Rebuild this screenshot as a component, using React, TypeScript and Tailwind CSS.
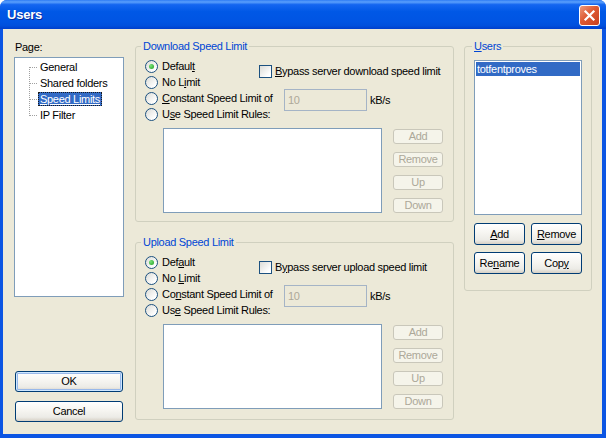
import React from "react";

function U({ children }: { children: React.ReactNode }) {
  return <span className="underline underline-offset-[1px]">{children}</span>;
}

function Radio({ checked, children }: { checked?: boolean; children: React.ReactNode }) {
  return (
    <div className="flex items-center h-[16px] whitespace-nowrap">
      <span className="w-[13px] h-[13px] shrink-0 rounded-full border border-[#1C5180] bg-[linear-gradient(135deg,#DCDCD7,#FFFFFF_80%)] flex items-center justify-center">
        {checked && (
          <span className="w-[5px] h-[5px] rounded-full bg-[radial-gradient(circle_at_35%_35%,#7BE27B,#1E9E1E)]" />
        )}
      </span>
      <span className="ml-[4px] leading-[13px]">{children}</span>
    </div>
  );
}

function Checkbox({ children }: { children: React.ReactNode }) {
  return (
    <div className="flex items-center whitespace-nowrap">
      <span className="w-[13px] h-[13px] shrink-0 border border-[#1C5180] bg-[linear-gradient(135deg,#DCDCD7,#FFFFFF_80%)]" />
      <span className="ml-[3px] leading-[13px]">{children}</span>
    </div>
  );
}

function DisabledBtn({ children }: { children: React.ReactNode }) {
  return (
    <div className="w-[50px] h-[15px] rounded-[3px] border border-[#C9C7BA] bg-[#F5F4EA] text-[#ACA899] flex items-center justify-center leading-[13px]">
      {children}
    </div>
  );
}

function Btn({ children, cls }: { children: React.ReactNode; cls: string }) {
  return (
    <div
      className={
        "rounded-[3px] border border-[#003C74] bg-[linear-gradient(to_bottom,#FFFFFF_0%,#F6F5F1_45%,#ECEBE6_80%,#D6D0C5_100%)] flex items-center justify-center leading-[13px] " +
        cls
      }
    >
      {children}
    </div>
  );
}

function SpeedGroup({
  title,
  mt,
  pb,
  labels,
}: {
  title: string;
  mt: string;
  pb: string;
  labels: React.ReactNode[];
}) {
  return (
    <fieldset className={"border border-[#D0D0BF] rounded-[3px] pl-[9px] pr-[10px] " + mt + " " + pb}>
      <legend className="-ml-[4px] px-[2px] text-[#0046D5] leading-[13px]">{title}</legend>
      <div className="grid grid-cols-[114px_25px_83px_1fr] grid-rows-[16px_16px_16px_16px] mt-[5px]">
        <div className="col-start-1 row-start-1">
          <Radio checked>{labels[0]}</Radio>
        </div>
        <div className="col-start-2 col-span-3 row-start-1 row-span-2 self-start mt-[7px]">
          <Checkbox>{labels[1]}</Checkbox>
        </div>
        <div className="col-start-1 row-start-2">
          <Radio>{labels[2]}</Radio>
        </div>
        <div className="col-start-1 row-start-3">
          <Radio>{labels[3]}</Radio>
        </div>
        <div className="col-start-3 row-start-3 row-span-2 self-start mt-[-1px] h-[22px] w-[83px] border border-[#A5B4C6] bg-[#ECE9D8] text-[#ACA899] flex items-center pl-[3px] leading-[13px]">
          10
        </div>
        <div className="col-start-4 row-start-3 row-span-2 self-start mt-[4px] pl-[3px] leading-[13px]">kB/s</div>
        <div className="col-start-1 row-start-4">
          <Radio>{labels[4]}</Radio>
        </div>
      </div>
      <div className="flex mt-[6px]">
        <div className="ml-[18px] w-[219px] h-[85px] border border-[#7F9DB9] bg-white" />
        <div className="ml-[11px] mt-[1px] flex flex-col gap-[8px]">
          <DisabledBtn>Add</DisabledBtn>
          <DisabledBtn>Remove</DisabledBtn>
          <DisabledBtn>Up</DisabledBtn>
          <DisabledBtn>Down</DisabledBtn>
        </div>
      </div>
    </fieldset>
  );
}

function TreeItem({
  label,
  first,
  last,
  selected,
}: {
  label: string;
  first?: boolean;
  last?: boolean;
  selected?: boolean;
}) {
  return (
    <div className="flex items-center h-[16px]">
      <svg width="23" height="16" className="shrink-0">
        <line
          x1="14.5"
          y1={first ? 8 : 0}
          x2="14.5"
          y2={last ? 9 : 16}
          stroke="#A0A0A0"
          strokeDasharray="1 1"
        />
        <line x1="15" y1="8.5" x2="23" y2="8.5" stroke="#A0A0A0" strokeDasharray="1 1" />
      </svg>
      <span
        className={
          "px-[1px] h-[14px] leading-[12px] border whitespace-nowrap " +
          (selected
            ? "bg-[#316AC5] text-white border-dotted border-[#1a1a1a] underline"
            : "border-transparent")
        }
      >
        {label}
      </span>
    </div>
  );
}

export default function App() {
  return (
    <div className="w-[606px] h-[438px] flex flex-col bg-[#0B55E3] rounded-t-[7px] overflow-hidden text-[11px] tracking-[-0.3px] text-black font-[family-name:Liberation_Sans,Arial,sans-serif]">
      {/* Title bar */}
      <div className="h-[29px] shrink-0 flex bg-[linear-gradient(to_bottom,#2E7CF4_0%,#5AA0FC_7%,#1466F0_16%,#0058E6_40%,#0054E3_75%,#0050DD_88%,#003FCC_100%)]">
        <div className="flex-1 flex items-center pl-[7px] text-white font-bold text-[13px] tracking-[-0.2px] [text-shadow:1px_1px_0_#0A2A9A]">
          Users
        </div>
        <div className="mt-[5px] mr-[6px] w-[21px] h-[21px] rounded-[3px] border border-white bg-[linear-gradient(135deg,#EC9A7C_0%,#DE5A33_45%,#C8401E_100%)] flex items-center justify-center">
          <svg width="13" height="13" viewBox="0 0 13 13">
            <path d="M2.5 2.5 L10.5 10.5 M10.5 2.5 L2.5 10.5" stroke="white" strokeWidth="2.2" strokeLinecap="square" />
          </svg>
        </div>
      </div>

      {/* Body */}
      <div className="flex-1 ml-[3px] mr-[4px] mb-[4px] bg-[#ECE9D8] flex pl-[11px]">
        {/* Left column */}
        <div className="w-[110px] shrink-0 mt-[12px] flex flex-col">
          <div className="pl-[1px] leading-[13px]">Page:</div>
          <div className="mt-[3px] h-[240px] border border-[#7F9DB9] bg-white pt-[1px]">
            <TreeItem label="General" first />
            <TreeItem label="Shared folders" />
            <TreeItem label="Speed Limits" selected />
            <TreeItem label="IP Filter" last />
          </div>
          <Btn cls="mt-[74px] ml-[1px] w-[108px] h-[21px] shadow-[inset_0_0_0_1px_#CEE7FF,inset_0_0_0_2px_#98B8EA]">OK</Btn>
          <Btn cls="mt-[9px] ml-[1px] w-[108px] h-[21px]">Cancel</Btn>
        </div>

        {/* Middle column */}
        <div className="w-[319px] shrink-0 ml-[11px] flex flex-col">
          <SpeedGroup
            title="Download Speed Limit"
            mt="mt-[11px]"
            pb="pb-[8px]"
            labels={[
              <>Defaul<U>t</U></>,
              <><U>B</U>ypass server download speed limit</>,
              <>No L<U>i</U>mit</>,
              <><U>C</U>onstant Speed Limit of</>,
              <>U<U>s</U>e Speed Limit Rules:</>,
            ]}
          />
          <SpeedGroup
            title="Upload Speed Limit"
            mt="mt-[14px]"
            pb="pb-[10px]"
            labels={[
              <>Def<U>a</U>ult</>,
              <>B<U>y</U>pass server upload speed limit</>,
              <>No <U>L</U>imit</>,
              <>Co<U>n</U>stant Speed Limit of</>,
              <>Us<U>e</U> Speed Limit Rules:</>,
            ]}
          />
        </div>

        {/* Right column */}
        <div className="w-[128px] shrink-0 ml-[10px]">
          <fieldset className="mt-[11px] border border-[#D0D0BF] rounded-[3px] pl-[9px] pb-[16px]">
            <legend className="-ml-[2px] px-[2px] text-[#0046D5] leading-[13px]">
              <U>U</U>sers
            </legend>
            <div className="mt-[7px] w-[108px] h-[155px] border border-[#7F9DB9] bg-white">
              <div className="mx-[1px] mt-[1px] h-[14px] bg-[#316AC5] text-white pl-[1px] leading-[14px]">
                totfentproves
              </div>
            </div>
            <div className="mt-[8px] grid grid-cols-[51px_51px] gap-x-[6px] gap-y-[7px]">
              <Btn cls="h-[22px]"><U>A</U>dd</Btn>
              <Btn cls="h-[22px]"><U>R</U>emove</Btn>
              <Btn cls="h-[22px] border-[#0F2340]">Re<U>n</U>ame</Btn>
              <Btn cls="h-[22px] border-[#0F2340]">Cop<U>y</U></Btn>
            </div>
          </fieldset>
        </div>
      </div>
    </div>
  );
}
